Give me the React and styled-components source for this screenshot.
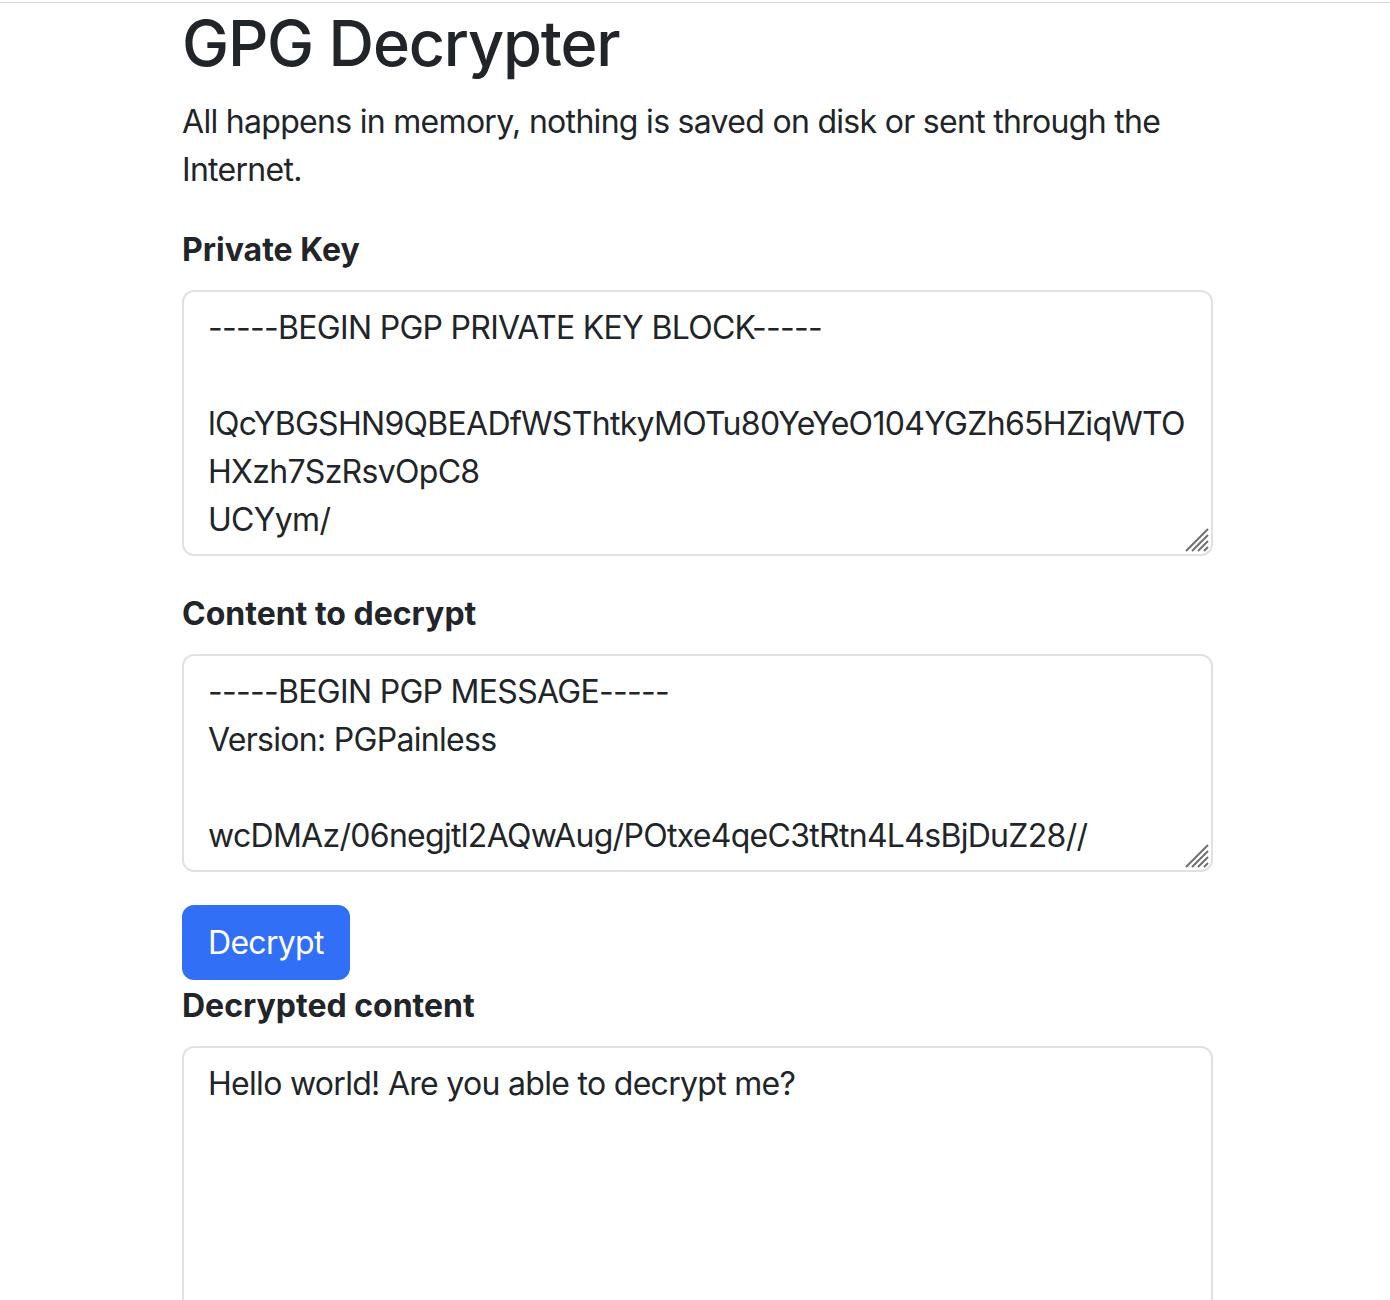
import React from 'react';
import styled, { createGlobalStyle } from 'styled-components';

const GlobalStyle = createGlobalStyle`
  html, body {
    margin: 0;
    padding: 0;
    background: #fff;
  }
  body {
    font-family: Inter, "Liberation Sans", sans-serif;
    color: #212529;
    font-size: 32px;
    line-height: 48px;
  }
`;

const TopRule = styled.div`
  margin-top: 2px;
  height: 1px;
  background-color: #d4d4d4;
`;

const Container = styled.div`
  width: 1031px;
  margin-left: calc(50% - 513px);
  padding-top: 1px;
`;

const Title = styled.h1`
  font-size: 63px;
  font-weight: 500;
  line-height: 78px;
  margin: 0 0 16px;
  letter-spacing: -1.2px;
`;

const Lead = styled.p`
  margin: 0 0 32px;
  padding-right: 30px;
  letter-spacing: -0.7px;
`;

const Group = styled.div`
  margin-bottom: ${p => p.$gap}px;
`;

const Label = styled.label`
  display: block;
  font-weight: 700;
  margin-bottom: 16px;
`;

const Field = styled.div`
  position: relative;
`;

const TextArea = styled.textarea`
  display: block;
  box-sizing: border-box;
  width: 100%;
  height: ${p => p.$height}px;
  padding: 12px 24px;
  font-family: inherit;
  font-size: 32px;
  line-height: 48px;
  letter-spacing: -0.7px;
  color: #212529;
  background: #fff;
  border: 2px solid #dee2e6;
  border-radius: 12px;
  resize: none;
  overflow: hidden;
  outline: none;
`;

const Grip = styled.svg`
  position: absolute;
  right: 4px;
  bottom: 4px;
  width: 26px;
  height: 26px;
  pointer-events: none;
`;

const ButtonRow = styled.div`
  display: flex;
  align-items: flex-start;
  height: 77px;
`;

const Button = styled.button`
  box-sizing: border-box;
  height: 75px;
  padding: 0 24px;
  font-family: inherit;
  font-size: 32px;
  line-height: 48px;
  letter-spacing: -0.7px;
  color: #fff;
  background-color: #316ff6;
  border: 2px solid #316ff6;
  border-radius: 12px;
  cursor: pointer;
`;

function ResizeGrip() {
  return (
    <Grip viewBox="0 0 26 26">
      <g stroke="#6f6f6f" strokeWidth="2" strokeLinecap="butt">
        <line x1="3" y1="25" x2="25" y2="3" />
        <line x1="9" y1="25" x2="25" y2="9" />
        <line x1="15" y1="25" x2="25" y2="15" />
        <line x1="21" y1="25" x2="25" y2="21" />
      </g>
    </Grip>
  );
}

const privateKey = [
  '-----BEGIN PGP PRIVATE KEY BLOCK-----',
  '',
  'lQcYBGSHN9QBEADfWSThtkyMOTu80YeYeO104YGZh65HZiqWTO',
  'HXzh7SzRsvOpC8',
  'UCYym/',
  'nLs9Y2XkQ0aC1fP7rV3mW8hJt2eZqK5uRdBxT4oGyN6sLwAi',
  '=Xk2f',
  '-----END PGP PRIVATE KEY BLOCK-----',
].join('\n');

const message = [
  '-----BEGIN PGP MESSAGE-----',
  'Version: PGPainless',
  '',
  'wcDMAz/06negjtl2AQwAug/POtxe4qeC3tRtn4L4sBjDuZ28//',
  'Vn8Qd3Kx1mTzR0bLcW5yHsJ9eU2pAoF7gNiE4',
  '=pQ7r',
  '-----END PGP MESSAGE-----',
].join('\n');

export default function App() {
  return (
    <>
      <GlobalStyle />
      <TopRule />
      <Container>
        <Title>GPG Decrypter</Title>
        <Lead>All happens in memory, nothing is saved on disk or sent through the Internet.</Lead>

        <Group $gap={34}>
          <Label>Private Key</Label>
          <Field>
            <TextArea $height={266} defaultValue={privateKey} spellCheck={false} />
            <ResizeGrip />
          </Field>
        </Group>

        <Group $gap={33}>
          <Label>Content to decrypt</Label>
          <Field>
            <TextArea $height={218} defaultValue={message} spellCheck={false} />
            <ResizeGrip />
          </Field>
        </Group>

        <ButtonRow>
          <Button>Decrypt</Button>
        </ButtonRow>

        <Group $gap={0}>
          <Label>Decrypted content</Label>
          <Field>
            <TextArea $height={410} defaultValue="Hello world! Are you able to decrypt me?" spellCheck={false} />
            <ResizeGrip />
          </Field>
        </Group>
      </Container>
    </>
  );
}
